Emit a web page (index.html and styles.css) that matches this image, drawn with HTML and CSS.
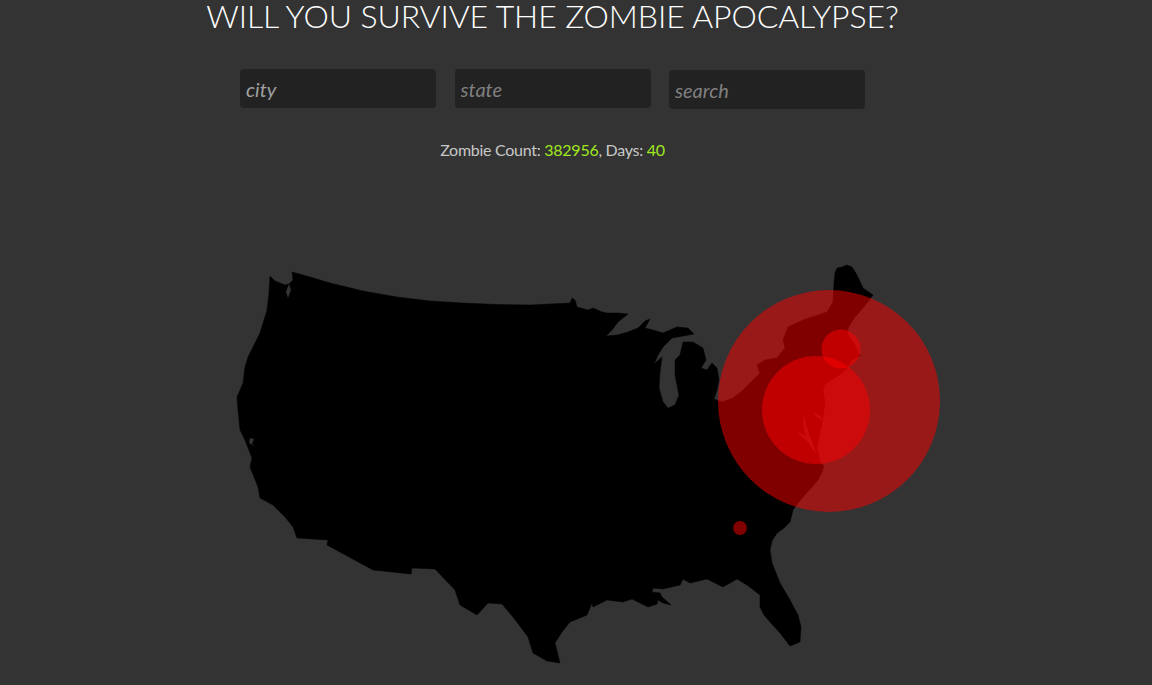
FILE: index.html
```html
<!DOCTYPE html>
<html lang="en">
<head>
<meta charset="utf-8">
<title>Will You Survive the Zombie Apocalypse?</title>
<link rel="stylesheet" href="styles.css">
</head>
<body>
<header class="top">
  <h1 class="title">WILL YOU SURVIVE THE ZOMBIE APOCALYPSE?</h1>
  <form class="search">
    <input class="field field-bright" type="text" placeholder="city">
    <input class="field" type="text" placeholder="state">
    <input class="field field-last" type="text" placeholder="search">
  </form>
  <p class="status">Zombie Count: <span class="num">382956</span>, Days: <span class="num">40</span></p>
</header>
<svg class="map" viewBox="0 240 1152 445" xmlns="http://www.w3.org/2000/svg" aria-label="Map of the United States">
  <path class="land" d="M270 276 275 281 285 285 289 284 293 280 292 272 310 277 330 283 363 291 397 297 430 301 463 303 497 304.500 530 305 570 303 572 298 575 300 577 307 588 310 593 308 602 312 607 313 617 313 628 314 618 322 612 330 606 336 617 335 628 332 638 328 645 321 650 319 645 328 653 330 663 333 677 327 688 328 694 334 683 336 672 338 663 347 658 355 654 364 662 357 660 372 659 388 663 402 668 408 675 405 679 395 675 375 675 360 680 355 683 342 693 342 703 348 706 360 701 368 707 370 712 363 717 368 719 380 717 390 714 399 722 402 733 398 742 391 750 383 760 373 757 365 765 360 777 358 785 348 783 340 788 327 803 320 827 312 833 302 834 283 835 273 837 268 842 267 847 265 852 267 857 275 863 288 873 295 870 299 863 308 855 317 848 328 848 335 855 345 859 355 861 355 852 360 847 368 842 373 825 385 823 390 825 403 822 423 817 447 820 462 824 466 822 472 818 480 812 487 803 497 795 507 793 510 790 522 784 528 777 533 772 541 770 550 772 563 780 583 790 600 798 615 801 627 800 642 790 646 780 633 770 622 764 615 760 607 760 595 747 585 737 579 723 587 707 579 690 583 683 579 680 585 663 589 653 588 652 592 660 593 662 597 671 605 663 603 658 600 657 604 648 607 638 602 632 599 623 602 607 600 593 607 592 603 587 615 570 622 562 632 555 643 560 663 547 661 533 653 528 637 513 617 502 604 488 603 477 615 460 605 455 590 435 569 412 568 411 574 373 570 327 545 328 540 297 538 293 527 285 517 273 505 260 498 258 487 250 467 252 458 245 440 240 430 238 410 237 397 243 383 245 367 248 357 254 345 260 333 267 310 269 293Z"/>
  <path class="water" d="M804 415 806 424 809 434 813 444 817 455 813 450 807 441 804 430 803 420Z"/>
  <path class="water" d="M813 411 821 417 822 421 816 416Z"/>
  <path class="water" d="M797 431 805 436 807 441 801 436Z"/>
  <path class="water" d="M842 374 830 381 824 386 832 383 843 377Z"/>
  <path class="water" d="M289 284 286 292 288 298 291 290Z"/>
  <path class="water" d="M250 438 254 439 252 444 256 447 249 443Z"/>
  <circle class="zone" cx="829" cy="401" r="111"/>
  <circle class="zone" cx="816" cy="410" r="54"/>
  <circle class="zone" cx="841" cy="349" r="19.500"/>
  <circle class="zone" cx="740" cy="528" r="7"/>
</svg>
</body>
</html>
```

FILE: styles.css
```css
html, body {
  margin: 0;
  height: 685px;
  overflow: hidden;
  background: #333333;
}

body {
  font-family: "Lato", "Liberation Sans", sans-serif;
}

.top {
  display: flex;
  flex-direction: column;
  align-items: center;
  height: 240px;
  padding-right: 47px;
  box-sizing: border-box;
}

.title {
  margin: 0;
  font-size: 32px;
  font-weight: 300;
  line-height: 31px;
  letter-spacing: -0.1px;
  color: #ffffff;
  white-space: nowrap;
}

.search {
  display: flex;
  gap: 18.5px;
  margin-top: 38px;
}

.field {
  width: 196px;
  height: 39px;
  box-sizing: border-box;
  padding: 0 7px 0 6px;
  border: 0;
  border-radius: 4px;
  background: #222222;
  font-family: inherit;
  font-size: 20px;
  font-style: italic;
  font-weight: 400;
  color: #999999;
}

.field::placeholder {
  color: #808080;
  opacity: 1;
}

.field-bright::placeholder {
  color: #a0a0a0;
}

.field-last {
  margin-top: 1px;
}

.status {
  margin: 31px 0 0;
  font-size: 16px;
  line-height: 20px;
  letter-spacing: -0.27px;
  color: #c8c8c8;
}

.num {
  color: #a0e81e;
}

.map {
  display: block;
  width: 1152px;
  height: 445px;
}

.land {
  fill: #000000;
  stroke: #000000;
  stroke-width: 0.5;
  stroke-linejoin: round;
}

.water {
  fill: #333333;
}

.zone {
  fill: #ff0000;
  fill-opacity: 0.5;
}
```
